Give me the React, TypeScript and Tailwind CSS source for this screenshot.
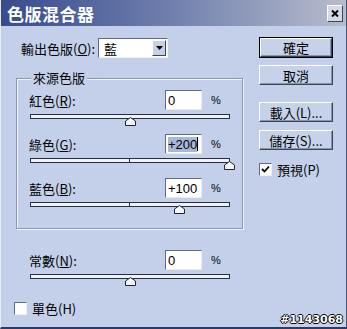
import React from "react";

const FONT = "font-['Noto_Sans_CJK_TC','Liberation_Sans',sans-serif]";

function Thumb({ pos }: { pos: number }) {
  return (
    <svg
      className="absolute top-[3px]"
      style={{ left: pos - 5 }}
      width="11"
      height="9"
      viewBox="0 0 11 9"
    >
      <polygon points="5.5,0.5 10.5,4 10.5,8.5 0.5,8.5 0.5,4" fill="#f4f6fb" stroke="#1f2638" strokeWidth="1" />
    </svg>
  );
}

function Slider({ value, tick }: { value: number; tick?: boolean }) {
  const pos = Math.round(((value + 200) / 400) * 199);
  return (
    <div className="relative ml-[13px] w-[200px] h-[12px]">
      <div className="relative h-[5px] border border-[#262e42] bg-[#eef1f8]">
        {tick && <div className="absolute left-[98px] top-0 w-px h-[3px] bg-[#262e42]" />}
      </div>
      <Thumb pos={pos} />
    </div>
  );
}

function NumInput({ children }: { children: React.ReactNode }) {
  return (
    <div className="w-[37px] h-[20px] bg-white border border-t-[#5d6c8c] border-l-[#5d6c8c] border-b-[#e8ecf6] border-r-[#e8ecf6] flex items-center pl-[2px] text-[13px] font-['Liberation_Sans',sans-serif] text-black leading-none">
      {children}
    </div>
  );
}

function Row({ label, mn, value }: { label: string; mn: string; value: React.ReactNode }) {
  return (
    <div className="flex items-center h-[20px]">
      <div className="w-[148px] pl-[12px] text-[13px] leading-none text-black">
        {label}(<u className="underline-offset-1">{mn}</u>):
      </div>
      <NumInput>{value}</NumInput>
      <div className="ml-[9px] text-[11px] font-['Liberation_Sans',sans-serif] text-black">%</div>
    </div>
  );
}

function Btn({ children, def }: { children: React.ReactNode; def?: boolean }) {
  const inner = (
    <div className="h-full w-full flex items-center justify-center text-[13px] leading-none text-black bg-[#c6d2ea] border border-t-white border-l-white border-b-[#3a4256] border-r-[#3a4256] shadow-[inset_-1px_-1px_0_#8a95ae]">
      {children}
    </div>
  );
  if (def)
    return <div className="w-[74px] h-[21px] border border-black">{inner}</div>;
  return <div className="w-[74px] h-[20px]">{inner}</div>;
}

function Check({ checked }: { checked?: boolean }) {
  return (
    <div className="w-[13px] h-[13px] bg-white border border-t-[#5d6c8c] border-l-[#5d6c8c] border-b-[#eef1f8] border-r-[#eef1f8] flex items-center justify-center">
      {checked && (
        <svg width="9" height="9" viewBox="0 0 9 9">
          <path d="M1 4 L3.5 6.5 L8 1.5" fill="none" stroke="#000" strokeWidth="1.8" />
        </svg>
      )}
    </div>
  );
}

export default function App() {
  return (
    <div className={`relative w-[347px] h-[329px] bg-[#c4d0e9] overflow-hidden ${FONT} border-l border-l-[#e6ebf6] border-r border-r-[#4a5678] border-b-2 border-b-[#2c3a66]`}>
      <div className="h-[26px] flex items-center justify-between bg-gradient-to-r from-[#384b8c] via-[#7180ae] to-[#b8bccb] pl-[6px] pr-[3px]">
        <span className="text-white font-bold text-[17px] leading-none tracking-[0.5px]">色版混合器</span>
        <div className="w-[16px] h-[17px] bg-[#d5d9e5] border border-t-white border-l-white border-b-[#404653] border-r-[#404653] flex items-center justify-center">
          <svg width="8" height="7" viewBox="0 0 8 7">
            <path d="M1 0.5 L7 6.5 M7 0.5 L1 6.5" stroke="#000" strokeWidth="2" />
          </svg>
        </div>
      </div>

      <div className="flex">
        <div className="w-[257px]">
          <div className="mt-[12px] flex items-center h-[20px] pl-[20px]">
            <div className="w-[77px] text-[13px] leading-none text-black">
              輸出色版(<u>O</u>):
            </div>
            <div className="w-[70px] h-[20px] bg-white border border-t-[#5d6c8c] border-l-[#5d6c8c] border-b-[#eef1f8] border-r-[#eef1f8] flex items-center justify-between pl-[5px] pr-[1px]">
              <span className="text-[13px] leading-none text-black">藍</span>
              <div className="w-[14px] h-[16px] bg-[#c6d2ea] border border-t-white border-l-white border-b-[#3a4256] border-r-[#3a4256] flex items-center justify-center">
                <svg width="7" height="4" viewBox="0 0 7 4">
                  <polygon points="0,0 7,0 3.5,4" fill="#000" />
                </svg>
              </div>
            </div>
          </div>

          <div className="relative mt-[20px] ml-[15px] w-[227px] h-[151px] border border-[#8b97b2] shadow-[inset_1px_1px_0_#f2f5fb,1px_1px_0_#f2f5fb] pt-[11px]">
            <span className="absolute -top-[8px] left-[14px] px-[2px] bg-[#c4d0e9] text-[13px] leading-[14px] text-black">
              來源色版
            </span>
            <Row label="紅色" mn="R" value="0" />
            <div className="mt-[4px]">
              <Slider value={0} />
            </div>
            <div className="mt-[8px]">
              <Row
                label="綠色"
                mn="G"
                value={
                  <span className="flex items-center">
                    <span className="bg-[#a8b6da] h-[15px] flex items-center">+200</span>
                    <span className="w-px h-[14px] bg-black" />
                  </span>
                }
              />
            </div>
            <div className="mt-[4px]">
              <Slider value={200} tick />
            </div>
            <div className="mt-[8px]">
              <Row label="藍色" mn="B" value="+100" />
            </div>
            <div className="mt-[4px]">
              <Slider value={100} tick />
            </div>
          </div>

          <div className="mt-[21px] ml-[16px]">
            <Row label="常數" mn="N" value="0" />
            <div className="mt-[4px]">
              <Slider value={0} />
            </div>
          </div>

          <div className="mt-[16px] ml-[13px] flex items-center">
            <Check />
            <span className="ml-[5px] text-[13px] leading-none text-black">單色(H)</span>
          </div>
        </div>

        <div className="pt-[11px] ml-[1px]">
          <Btn def>確定</Btn>
          <div className="mt-[7px]">
            <Btn>取消</Btn>
          </div>
          <div className="mt-[17px]">
            <Btn>載入(L)...</Btn>
          </div>
          <div className="mt-[8px]">
            <Btn>儲存(S)...</Btn>
          </div>
          <div className="mt-[13px] flex items-center">
            <Check checked />
            <span className="ml-[5px] text-[13px] leading-none text-black">預視(P)</span>
          </div>
        </div>
      </div>

      <div className="absolute right-[3px] bottom-[2px] font-['DejaVu_Sans',sans-serif] font-bold text-[11px] leading-none text-white [text-shadow:1px_0_0_#000,-1px_0_0_#000,0_1px_0_#000,0_-1px_0_#000]">
        #1143068
      </div>
    </div>
  );
}
